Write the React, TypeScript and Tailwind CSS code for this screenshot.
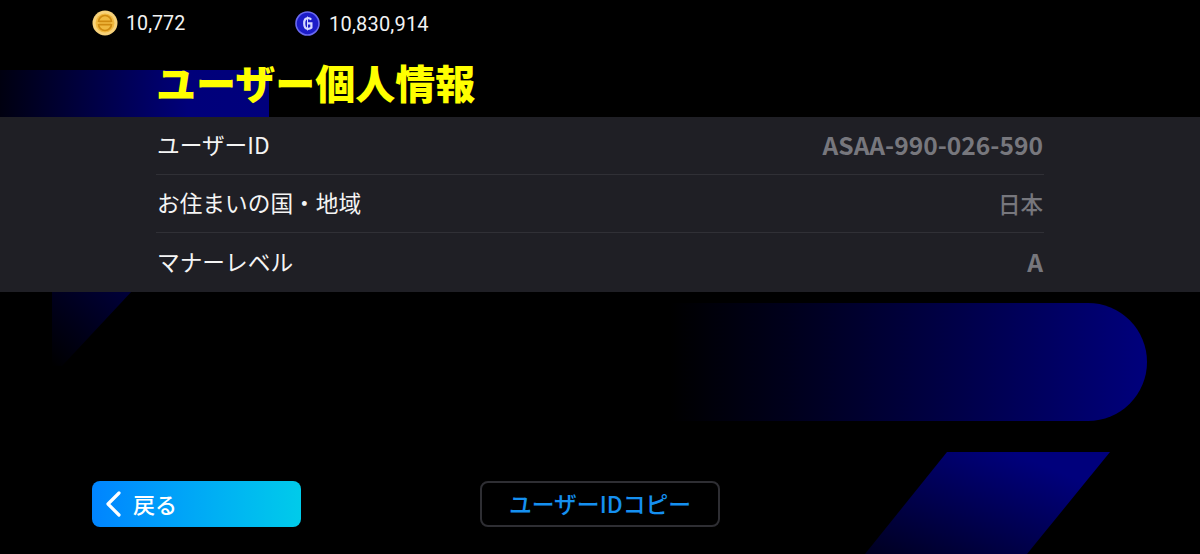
const cjk = "font-['Noto_Sans_CJK_JP',sans-serif]"

const rows = [
  { label: 'ユーザーID', value: 'ASAA-990-026-590', size: 'text-[24.6px] font-bold -mt-[3px]' },
  { label: 'お住まいの国・地域', value: '日本', size: 'text-[22.5px] font-medium -mt-[1px]' },
  { label: 'マナーレベル', value: 'A', size: 'text-[24.6px] font-bold -mt-[3px]' },
]

function Backdrop() {
  return (
    <svg className="absolute inset-0" width="1200" height="554" viewBox="0 0 1200 554">
      <defs>
        <linearGradient id="leftFade" x1="0" y1="0" x2="1" y2="0">
          <stop offset="0" stopColor="#000010" />
          <stop offset="0.7" stopColor="#00007a" />
          <stop offset="1" stopColor="#00007c" />
        </linearGradient>
        <linearGradient id="tailFade" x1="1" y1="0" x2="0" y2="1">
          <stop offset="0" stopColor="#00003c" />
          <stop offset="1" stopColor="#000000" />
        </linearGradient>
        <linearGradient id="barFade" x1="0" y1="0" x2="1" y2="0">
          <stop offset="0" stopColor="#000000" />
          <stop offset="0.25" stopColor="#00001c" />
          <stop offset="0.6" stopColor="#000048" />
          <stop offset="1" stopColor="#00007c" />
        </linearGradient>
        <linearGradient id="slashFade" x1="0" y1="1" x2="1" y2="0">
          <stop offset="0" stopColor="#000020" />
          <stop offset="0.8" stopColor="#00007c" />
        </linearGradient>
      </defs>
      <path d="M0 70H269V120H0Z" fill="url(#leftFade)" />
      <path d="M52 290H133L62 366H52Z" fill="url(#tailFade)" />
      <path d="M670 303H1088A59 59 0 0 1 1088 421H670Z" fill="url(#barFade)" />
      <path d="M947 452H1110L1027 554H865Z" fill="url(#slashFade)" />
    </svg>
  )
}

function GoldCoin() {
  return (
    <svg width="26" height="26" viewBox="0 0 26 26">
      <circle cx="13" cy="13" r="12.5" fill="#f7d27a" />
      <circle cx="13" cy="13" r="9.5" fill="#f0b93f" />
      <path d="M6.5 12a6.5 6.5 0 0 1 13 0" fill="none" stroke="#cf8a10" strokeWidth="1.7" />
      <path d="M6.5 14a6.5 6.5 0 0 0 13 0" fill="none" stroke="#cf8a10" strokeWidth="1.7" />
      <path d="M7 11.3H19M7 14.7H19" stroke="#cf8a10" strokeWidth="1.7" />
    </svg>
  )
}

function BlueCoin() {
  return (
    <svg width="25" height="25" viewBox="0 0 25 25">
      <circle cx="12.5" cy="12.5" r="11.5" fill="#1c1cc8" stroke="#6a6af0" strokeWidth="1.6" />
      <path d="M16.2 8.6C15.4 7.6 14.2 7.2 13 7.2 10.6 7.2 9.2 9.4 9.2 12.5S10.6 17.8 13 17.8c1.3 0 2.5-.4 3.4-1.2V12.4H13" fill="none" stroke="#d5d8ff" strokeWidth="2.2" />
      <path d="M12.5 5.5V19.5" stroke="#d5d8ff" strokeWidth="1" />
    </svg>
  )
}

export default function App() {
  return (
    <div className={`relative w-[1200px] h-[554px] overflow-hidden bg-black flex flex-col ${cjk}`}>
      <Backdrop />

      {/* Currency bar */}
      <div className="relative h-[47px] pl-[92px] flex items-center font-['Roboto',sans-serif] text-[20px] tracking-[0.2px] text-[#f2f2f2]">
        <div className="w-[203px] flex items-center gap-2">
          <GoldCoin />
          <span className="text-[19.7px] tracking-normal">10,772</span>
        </div>
        <div className="flex items-center gap-[9px]">
          <BlueCoin />
          <span>10,830,914</span>
        </div>
      </div>

      {/* Title */}
      <h1 className="relative h-[70px] pl-[156px] pt-[6px] text-[40px] leading-[58px] font-black text-[#ffff00]">
        ユーザー個人情報
      </h1>

      {/* Info panel */}
      <div className="relative h-[175px] bg-[#1f1f25] px-[156px] flex flex-col">
        {rows.map((row, i) => (
          <div
            key={row.label}
            className={`h-[58px] px-[1px] flex items-center justify-between ${i < rows.length - 1 ? 'border-b border-[#303036]' : ''}`}
          >
            <span className="text-[22.7px] leading-[30px] -mt-[1px] text-[#f4f4f4]">{row.label}</span>
            <span className={`${row.size} leading-[30px] text-[#77777d]`}>{row.value}</span>
          </div>
        ))}
      </div>

      {/* Buttons */}
      <div className="relative mt-auto mb-[27px] pl-[92px] flex items-center gap-[179px]">
        <button className="w-[209px] h-[46px] rounded-lg bg-gradient-to-r from-[#0084ff] to-[#00cbea] flex items-center pl-[12px] gap-[9px] text-[22px] font-medium text-white">
          <svg width="20" height="28" viewBox="0 0 20 28" fill="none">
            <path d="M15 3L4 14L15 25" stroke="white" strokeWidth="3.2" strokeLinecap="round" strokeLinejoin="round" />
          </svg>
          <span className="-mt-[2px]">戻る</span>
        </button>
        <button className="w-[240px] h-[46px] rounded-lg border-2 border-[#2e2e33] flex items-center justify-center text-[22.8px] font-medium text-[#1590f0]">
          ユーザーIDコピー
        </button>
      </div>
    </div>
  )
}
